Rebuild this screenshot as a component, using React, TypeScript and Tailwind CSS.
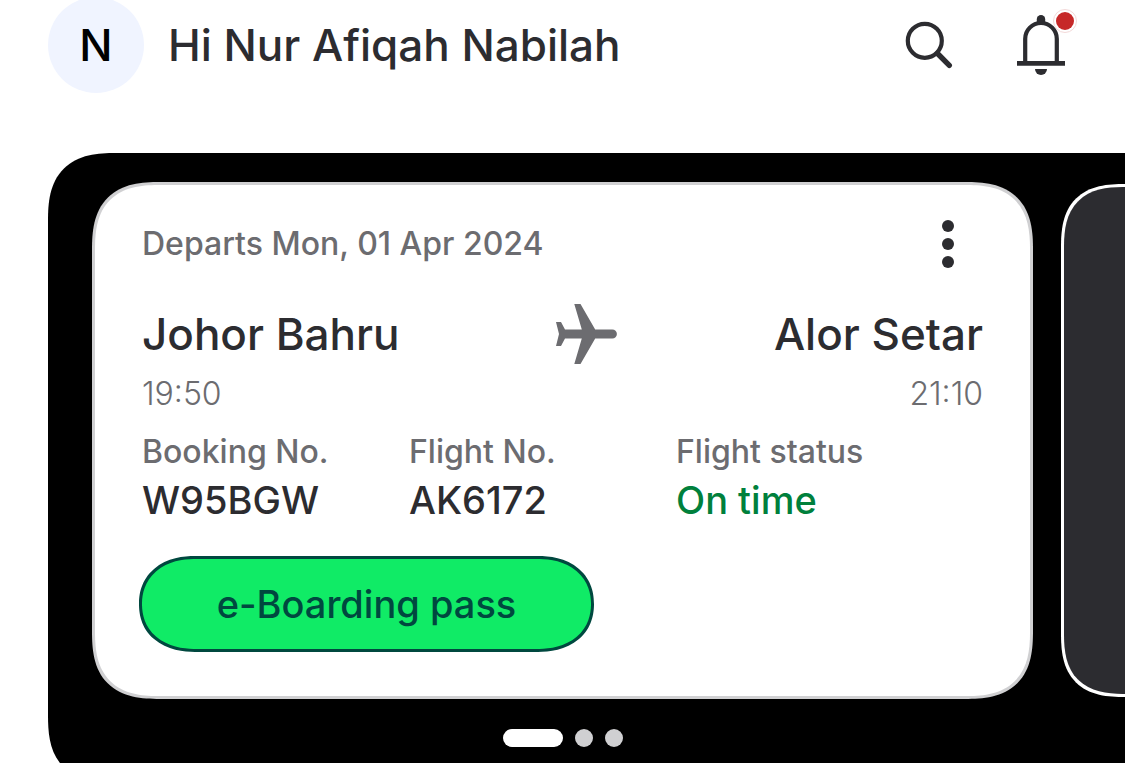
interface DetailProps {
  label: string
  value: string
  valueClass?: string
}

function SearchIcon() {
  return (
    <svg viewBox="0 0 48 48" className="h-12 w-12" fill="none" stroke="#2c2c30" aria-hidden="true">
      <circle cx="19.8" cy="19.8" r="17" strokeWidth="4.2" />
      <path d="M32.5 32.5 44.3 44.3" strokeWidth="5.4" strokeLinecap="round" />
    </svg>
  )
}

function BellIcon() {
  return (
    <svg viewBox="0 0 48 60" className="h-15 w-12" fill="none" aria-hidden="true">
      <path d="M19.8 9V4.2a4.2 4.2 0 0 1 8.4 0V9z" fill="#2c2c30" />
      <path d="M8.2 48V23.8a15.8 15.8 0 0 1 31.6 0V48" stroke="#2c2c30" strokeWidth="4.2" />
      <path d="M0 46h48v4.8H0z" fill="#2c2c30" />
      <path d="M18 54h12a6 6 0 0 1-12 0z" fill="#2c2c30" />
    </svg>
  )
}

function PlaneIcon() {
  return (
    <svg viewBox="0 0 61 60" className="h-15 w-[61px]" fill="#6c6c70" aria-hidden="true">
      <path d="M18.3 0h6.2l14.7 25.4h17.1a4.6 4.6 0 0 1 0 9.2H39.2L24.5 60h-6.2l7.5-25.4H9L5 42H0l3-12L0 18h5l4 7.4h16.8z" />
    </svg>
  )
}

function Detail({ label, value, valueClass = "text-[#2c2c30]" }: DetailProps) {
  return (
    <div>
      <dt className="text-[32px] leading-10 text-[#6c6c70]">{label}</dt>
      <dd className={`mt-1 text-[38px] leading-12 ${valueClass}`}>{value}</dd>
    </div>
  )
}

export default function App() {
  return (
    <div className="h-screen overflow-hidden bg-white font-['Inter',sans-serif] font-medium text-[#2c2c30]">
      {/* Header */}
      <header className="-mt-[3px] flex items-center pl-12 pr-[60px]">
        <div className="flex h-24 w-24 shrink-0 items-center justify-center rounded-full bg-[#f0f4ff] text-[44px] text-black">
          N
        </div>
        <h1 className="ml-6 whitespace-nowrap text-[44px] leading-14">Hi Nur Afiqah Nabilah</h1>
        <div className="ml-auto flex items-center gap-16">
          <button aria-label="Search">
            <SearchIcon />
          </button>
          <button className="relative" aria-label="Notifications">
            <BellIcon />
            <span className="absolute -right-3 -top-1.5 h-6 w-6 rounded-full border border-[#f3d9d9] bg-white p-0.5">
              <span className="block h-full w-full rounded-full bg-[#c62828]" />
            </span>
          </button>
        </div>
      </header>

      {/* Upcoming trips */}
      <main className="ml-12 mt-15 flex gap-7 rounded-l-[68px] bg-black pb-9 pl-11 pt-[29px] [corner-shape:superellipse(1.4)]">
        <div className="min-w-0 flex-1">
          <article className="rounded-[68px] border-[3px] border-[#d0d0d2] bg-white px-11 pb-11 pt-[35px] [corner-shape:superellipse(1.4)]">
            <div className="px-[3px]">
              <div className="flex h-12 items-center justify-between">
                <p className="text-[32px] leading-10 text-[#6c6c70]">Departs Mon, 01 Apr 2024</p>
                <button className="mr-[11px] flex w-12 flex-col items-center gap-1.5" aria-label="More options">
                  <span className="h-3 w-3 rounded-full bg-[#2c2c30]" />
                  <span className="h-3 w-3 rounded-full bg-[#2c2c30]" />
                  <span className="h-3 w-3 rounded-full bg-[#2c2c30]" />
                </button>
              </div>

              <div className="mt-9 flex items-center justify-between text-[44px] leading-14">
                <h2>Johor Bahru</h2>
                <PlaneIcon />
                <h2>Alor Setar</h2>
              </div>
              <div className="mt-2.5 flex justify-between text-[32px] font-light leading-10 text-[#6c6c70]">
                <time>19:50</time>
                <time>21:10</time>
              </div>

              <dl className="mt-[18px] grid grid-cols-3 pr-10">
                <Detail label="Booking No." value="W95BGW" />
                <Detail label="Flight No." value="AK6172" />
                <Detail label="Flight status" value="On time" valueClass="text-[#00803c]" />
              </dl>
            </div>

            <button className="mt-8 h-24 w-[455px] rounded-[56px/48px] border-[3px] border-[#00483f] bg-[#10eb66] text-[38px] text-[#00483f] [corner-shape:superellipse(1.15)]">
              e-Boarding pass
            </button>
          </article>

          {/* Pager */}
          <div className="mt-[30px] flex justify-center gap-3">
            <span className="h-[18px] w-15 rounded-full bg-white" />
            <span className="h-[18px] w-[18px] rounded-full bg-[#d0d0d2]" />
            <span className="h-[18px] w-[18px] rounded-full bg-[#d0d0d2]" />
          </div>
        </div>

        {/* Next card peeking in */}
        <div className="mb-[50px] mt-0.5 w-16 rounded-l-[68px] border-[3px] border-r-0 border-white bg-[#2c2c30] [corner-shape:superellipse(1.4)]" />
      </main>
    </div>
  )
}
